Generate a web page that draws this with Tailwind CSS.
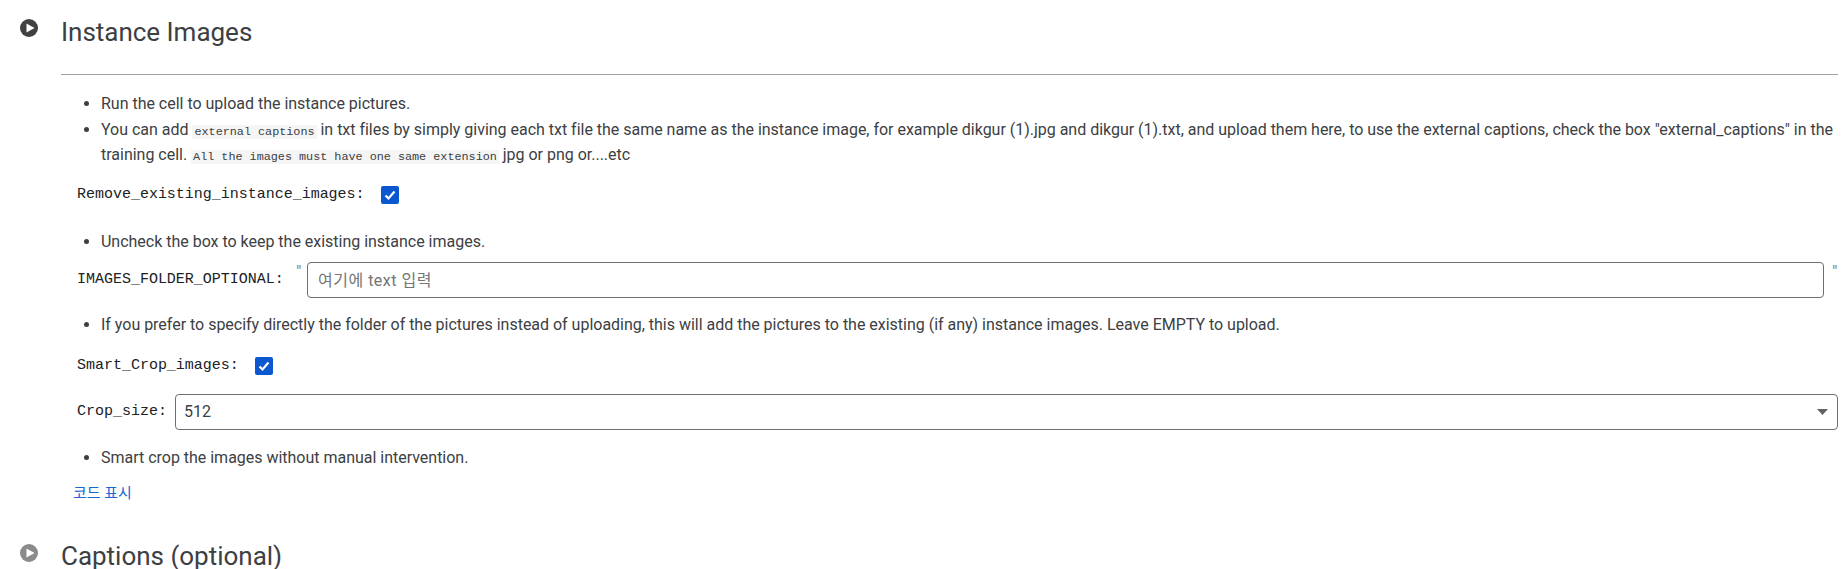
<!DOCTYPE html>
<html lang="ko">
  <head>
    <meta charset="UTF-8" />
    <title>Instance Images</title>
    <script src="https://cdn.jsdelivr.net/npm/@tailwindcss/browser@4"></script>
  </head>
  <body class="h-[569px] overflow-hidden bg-white text-[#3c4043] font-['Roboto','Noto_Sans_CJK_KR',sans-serif] text-[16px] tracking-[-0.015px]">
    <!-- Instance Images cell -->
    <section class="flex">
      <div class="w-[61px] shrink-0 pl-[20px] pt-[19px]">
        <svg width="18" height="18" viewBox="0 0 18 18"><circle cx="9" cy="9" r="9" fill="#404040" /><path d="M6.5 4.5v9L14.5 9z" fill="#fff" /></svg>
      </div>
      <div class="flex-1 pr-[5px] min-w-0">
        <h1 class="h-[64px] text-[26px] leading-[64px] text-[#3c4043]">Instance Images</h1>
        <hr class="mt-[10px] border-t border-[#a0a0a0]" />
        <ul class="mt-[16px] ml-[40px] list-disc leading-[25.6px]">
          <li>Run the cell to upload the instance pictures.</li>
          <li>You can add <code class="bg-[#f5f5f5] px-[2px] font-['Liberation_Mono',monospace] text-[11.8px] leading-none">external captions</code> in txt files by simply giving each txt file the same name as the instance image, for example dikgur (1).jpg and dikgur (1).txt, and upload them here, to use the external captions, check the box "external_captions" in the training cell. <code class="bg-[#f5f5f5] px-[2px] font-['Liberation_Mono',monospace] text-[11.8px] leading-none">All the images must have one same extension</code> jpg or png or....etc</li>
        </ul>
        <div class="mt-[18px] ml-[16px] flex h-[18px] items-center gap-[16px]">
          <span class="font-['Liberation_Mono',monospace] text-[15px] text-[#202124]">Remove_existing_instance_images:</span>
          <span class="flex h-[18px] w-[18px] items-center justify-center rounded-[2px] bg-[#0b57d0]"><svg width="14" height="14" viewBox="0 0 14 14"><path d="M2.5 7.5l3 3 6-7" fill="none" stroke="#fff" stroke-width="2.2" /></svg></span>
        </div>
        <ul class="mt-[25px] ml-[40px] list-disc leading-[25.6px]">
          <li>Uncheck the box to keep the existing instance images.</li>
        </ul>
        <div class="mt-[8px] ml-[16px] flex items-center">
          <span class="w-[215px] shrink-0 font-['Liberation_Mono',monospace] text-[15px] text-[#202124]">IMAGES_FOLDER_OPTIONAL:</span>
          <span class="-mt-[18px] w-[15px] shrink-0 pl-[4px] text-[17px] text-[#80868b]">"</span>
          <input type="text" placeholder="여기에 text 입력" class="h-[36px] w-[1517px] rounded-[4px] border border-[#6f6f6f] px-[10px] tracking-[0.5px] placeholder:text-[#757575]" />
          <span class="-mt-[18px] ml-[8px] text-[17px] text-[#80868b]">"</span>
        </div>
        <ul class="mt-[14px] ml-[40px] list-disc leading-[25.6px]">
          <li>If you prefer to specify directly the folder of the pictures instead of uploading, this will add the pictures to the existing (if any) instance images. Leave EMPTY to upload.</li>
        </ul>
        <div class="mt-[19px] ml-[16px] flex h-[18px] items-center gap-[16px]">
          <span class="font-['Liberation_Mono',monospace] text-[15px] text-[#202124]">Smart_Crop_images:</span>
          <span class="flex h-[18px] w-[18px] items-center justify-center rounded-[2px] bg-[#0b57d0]"><svg width="14" height="14" viewBox="0 0 14 14"><path d="M2.5 7.5l3 3 6-7" fill="none" stroke="#fff" stroke-width="2.2" /></svg></span>
        </div>
        <div class="mt-[19px] ml-[16px] flex items-center">
          <span class="w-[98px] shrink-0 font-['Liberation_Mono',monospace] text-[15px] text-[#202124]">Crop_size:</span>
          <div class="relative flex-1">
            <select class="h-[36px] w-full appearance-none rounded-[4px] border border-[#6f6f6f] bg-white px-[8px]"><option>512</option></select>
            <svg class="absolute right-[10px] top-[15px]" width="11" height="6" viewBox="0 0 11 6"><path d="M0 0h11L5.5 6z" fill="#5f6368" /></svg>
          </div>
        </div>
        <ul class="mt-[15px] ml-[40px] list-disc leading-[25.6px]">
          <li>Smart crop the images without manual intervention.</li>
        </ul>
        <a href="#" class="mt-[12px] ml-[12px] block h-[20px] text-[15px] leading-[20px] text-[#1a66d6]">코드 표시</a>
      </div>
    </section>
    <!-- Captions cell -->
    <section class="mt-[21px] flex">
      <div class="w-[61px] shrink-0 pl-[20px] pt-[20px]">
        <svg width="18" height="18" viewBox="0 0 18 18"><circle cx="9" cy="9" r="9" fill="#8a8a8a" /><path d="M6.5 4.5v9L14.5 9z" fill="#fff" /></svg>
      </div>
      <h1 class="h-[64px] text-[26px] leading-[64px] text-[#3c4043]">Captions (optional)</h1>
    </section>
  </body>
</html>
